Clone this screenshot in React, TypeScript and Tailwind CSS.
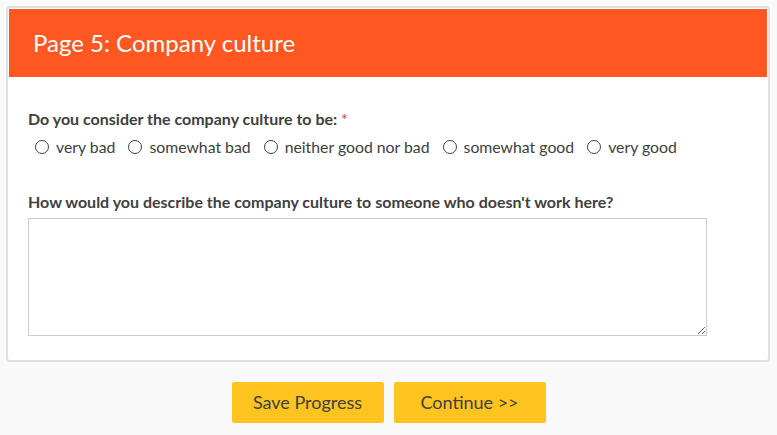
import React from "react";

const options = ["very bad", "somewhat bad", "neither good nor bad", "somewhat good", "very good"];

function Radio({ label }: { label: string }) {
  return (
    <label className="flex items-center gap-[7px] mr-[13px]">
      <span className="w-[14px] h-[14px] rounded-full border border-[#404040] bg-white" />
      <span>{label}</span>
    </label>
  );
}

export default function App() {
  return (
    <div className="min-h-[435px] bg-[#f9f9f9] pt-[6px] px-[6px] font-['Lato',sans-serif] text-[#404040]">
      <div className="border-2 border-[#e0e0e0] rounded-[4px] bg-white p-px w-[764px]">
        <div className="bg-[#ff5722] h-[68px] flex items-center pl-[24px]">
          <h1 className="text-white text-[24px] leading-none pb-[1px]">Page 5: Company culture</h1>
        </div>
        <div className="pl-[19px] pt-[33px] pb-[23px]">
          <div className="text-[16px] font-bold leading-[18px]">
            Do you consider the company culture to be: <span className="text-[#e53935] font-normal">*</span>
          </div>
          <div className="flex items-center pl-[7px] mt-[9px] text-[15.8px] leading-[20px]">
            {options.map((o) => (
              <Radio key={o} label={o} />
            ))}
          </div>
          <div className="text-[16px] font-bold leading-[18px] mt-[36px]">
            How would you describe the company culture to someone who doesn't work here?
          </div>
          <textarea className="block mt-[7px] w-[679px] h-[118px] border border-[#cccccc] bg-white outline-none" />
        </div>
      </div>
      <div className="flex justify-center gap-[10px] mt-[20px]">
        <button className="w-[152px] h-[41px] bg-[#ffc41f] rounded-[2px] text-[18px] text-[#404040]">
          Save Progress
        </button>
        <button className="w-[152px] h-[41px] bg-[#ffc41f] rounded-[2px] text-[18px] text-[#404040]">
          Continue &gt;&gt;
        </button>
      </div>
    </div>
  );
}
